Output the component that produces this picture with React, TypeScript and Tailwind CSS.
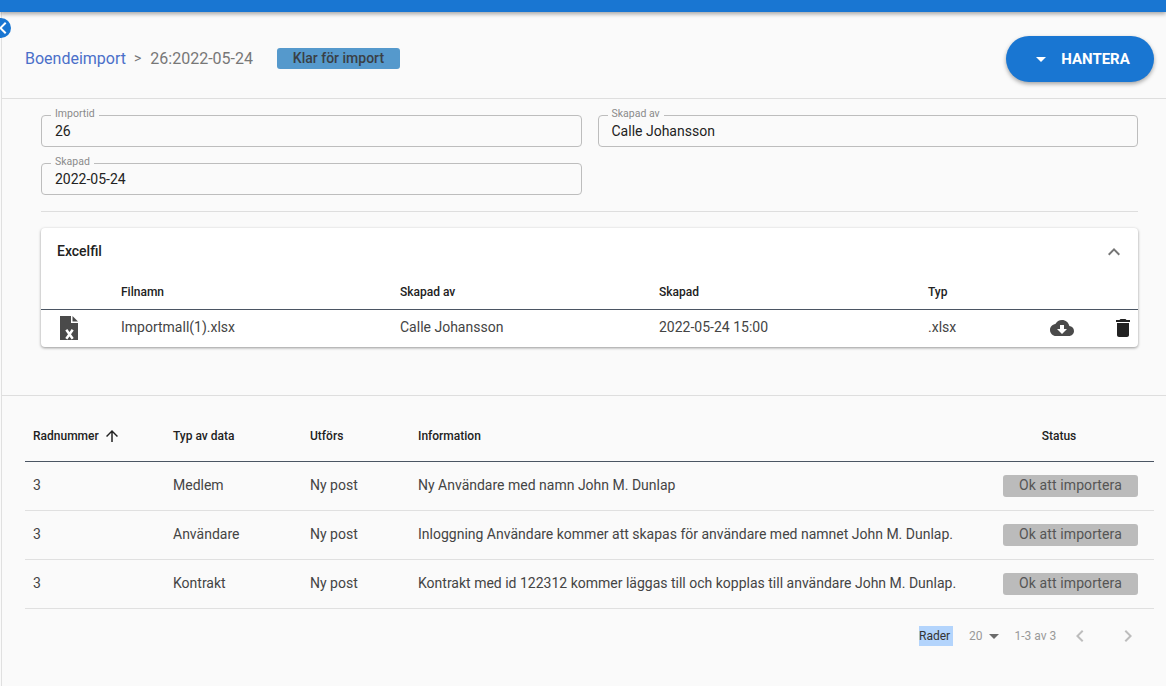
import React from "react";

const Icon = ({ d, size = 24, className = "" }: { d: string; size?: number; className?: string }) => (
  <svg width={size} height={size} viewBox="0 0 24 24" fill="currentColor" className={className}>
    <path d={d} />
  </svg>
);

const Field = ({ label, value }: { label: string; value: string }) => (
  <fieldset className="w-full h-[38px] -mt-[6px] border border-[#bdbdbd] rounded-[4px] pl-[9px] pr-2 min-w-0">
    <legend className="text-[10.5px] leading-[10px] pb-[2px] text-[#8a8a8a] px-[4px] ml-0">{label}</legend>
    <div className="pl-[4px] text-[14px] leading-[20px] text-[#222222]">{value}</div>
  </fieldset>
);

const rows = [
  ["Medlem", "Ny Användare med namn John M. Dunlap"],
  ["Användare", "Inloggning Användare kommer att skapas för användare med namnet John M. Dunlap."],
  ["Kontrakt", "Kontrakt med id 122312 kommer läggas till och kopplas till användare John M. Dunlap."],
];

export default function App() {
  return (
    <div className="relative h-[686px] w-full overflow-hidden bg-[#fafafa] text-[14px] text-[#333333]" style={{ fontFamily: "Roboto, sans-serif" }}>
      <div className="relative z-10 h-[12px] bg-[#1976d2] shadow-[0_2px_4px_rgba(0,0,0,0.35)]" />
      <div className="absolute z-20 left-[-9px] top-[18px] flex h-[20px] w-[20px] items-center justify-center rounded-full bg-[#1976d2] text-white">
        <Icon d="M15.41 7.41L14 6l-6 6 6 6 1.41-1.41L10.83 12z" size={24} className="shrink-0 ml-[3px]" />
      </div>
      <div className="ml-[1px] h-[674px] border-l border-[#e0e0e0]">
        <header className="flex h-[87px] items-start border-b border-[#dedede] pl-[23px] pr-[12px]">
          <div className="mt-[36px] flex h-[21px] items-center">
            <span className="text-[#4a6fc9] text-[16px]">Boendeimport</span>
            <span className="ml-[8px] text-[#777777] text-[14px]">&gt;</span>
            <span className="ml-[9px] text-[#777777] text-[16px]">26:2022-05-24</span>
            <span className="ml-[24px] flex h-[21px] w-[123px] items-center justify-center rounded-[3px] bg-[#5599cc] text-[14px] font-medium text-[#3a3f45]">Klar för import</span>
          </div>
          <button className="ml-auto mt-[24px] flex h-[46px] w-[148px] items-center justify-center rounded-[23px] bg-[#1976d2] text-[15px] font-bold text-white shadow-[0_2px_4px_rgba(0,0,0,0.35)]">
            <Icon d="M7 10l5 5 5-5z" size={24} className="mr-[8px] -ml-[1px]" />
            <span>HANTERA</span>
          </button>
        </header>

        <section className="h-[297px] border-b border-[#dedede] pl-[39px] pr-[28px] pt-[16px]">
          <div className="grid grid-cols-2 gap-x-[16px] gap-y-[16px]">
            <Field label="Importid" value="26" />
            <Field label="Skapad av" value="Calle Johansson" />
            <Field label="Skapad" value="2022-05-24" />
          </div>
          <div className="mt-[16px] border-t border-[#dedede]" />
          <div className="mt-[16px] h-[119px] rounded-[4px] bg-white shadow-[0_1px_3px_rgba(0,0,0,0.4)]">
            <div className="flex h-[48px] items-center pl-[16px] pr-[12px]">
              <span className="-mt-[2px] font-medium text-[#222222]">Excelfil</span>
              <Icon d="M12 8l-6 6 1.41 1.41L12 10.83l4.59 4.58L18 14z" className="ml-auto text-[#757575]" />
            </div>
            <div className="flex h-[34px] items-center border-b border-[#4b5563] pb-[2px] text-[12px] font-medium text-[#222222]">
              <span className="ml-[80px] w-[279px]">Filnamn</span>
              <span className="w-[259px]">Skapad av</span>
              <span className="w-[269px]">Skapad</span>
              <span>Typ</span>
            </div>
            <div className="flex h-[37px] items-center pb-[2px] text-[#444444]">
              <svg width="24" height="24" viewBox="0 0 24 24" className="ml-[16px] text-[#4a4a4a]" fill="currentColor">
                <path d="M3 0h11v7h7v17H3z" />
                <path d="M15.5 0L21 5.5h-5.5z" />
                <path d="M9.3 13.8l6.4 8.9M15.7 13.8l-6.4 8.9" stroke="#ffffff" strokeWidth="2.5" fill="none" />
              </svg>
              <span className="ml-[40px] w-[279px]">Importmall(1).xlsx</span>
              <span className="w-[259px]">Calle Johansson</span>
              <span className="w-[269px]">2022-05-24 15:00</span>
              <span className="w-[122px]">.xlsx</span>
              <Icon d="M19.35 10.04C18.67 6.59 15.64 4 12 4 9.11 4 6.6 5.64 5.35 8.04 2.34 8.36 0 10.91 0 14c0 3.31 2.69 6 6 6h13c2.76 0 5-2.24 5-5 0-2.64-2.05-4.78-4.65-4.96zM17 13l-5 5-5-5h3V9h4v4h3z" className="text-[#4a4a4a]" />
              <Icon d="M6 19c0 1.1.9 2 2 2h8c1.1 0 2-.9 2-2V7H6v12zM19 4h-3.5l-1-1h-5l-1 1H5v2h14V4z" className="ml-[37px] text-[#222222]" />
            </div>
          </div>
        </section>

        <section className="pl-[23px] pr-[12px]">
          <div className="flex h-[66px] items-center border-b border-[#4b5563] pt-[15px] text-[12px] font-medium text-[#222222]">
            <span className="flex w-[148px] items-center pl-[8px]">
              Radnummer
              <Icon d="M4 12l1.41 1.41L11 7.83V20h2V7.83l5.58 5.59L20 12l-8-8-8 8z" size={18} className="ml-[4px]" />
            </span>
            <span className="w-[137px]">Typ av data</span>
            <span className="w-[108px]">Utförs</span>
            <span className="w-[585px]">Information</span>
            <span className="w-[151px] pr-[39px] text-center">Status</span>
          </div>
          {rows.map(([type, info]) => (
            <div key={type} className="flex h-[49px] items-center border-b border-[#e0e0e0] text-[#444444]">
              <span className="-mt-[2px] w-[148px] pl-[8px]">3</span>
              <span className="-mt-[2px] w-[137px]">{type}</span>
              <span className="-mt-[2px] w-[108px]">Ny post</span>
              <span className="-mt-[2px] w-[585px] whitespace-nowrap">{info}</span>
              <span className="flex h-[22px] w-[135px] items-center justify-center rounded-[3px] bg-[#bbbbbb] pb-[2px] tracking-[0.1px] text-[#555555]">Ok att importera</span>
            </div>
          ))}
          <div className="flex h-[54px] items-center text-[12px] text-[#999999]">
            <span className="ml-[894px] flex h-[20px] w-[34px] items-center bg-[#b3d4fc] text-[#333333]">Rader</span>
            <span className="ml-[16px]">20</span>
            <Icon d="M7 10l5 5 5-5z" size={24} className="-ml-[1px] text-[#6b6b6b]" />
            <span className="ml-[9px]">1-3 av 3</span>
            <Icon d="M15.41 7.41L14 6l-6 6 6 6 1.41-1.41L10.83 12z" className="ml-[12px] text-[#bdbdbd]" />
            <Icon d="M10 6L8.59 7.41 13.17 12l-4.58 4.59L10 18l6-6z" className="ml-[24px] text-[#bdbdbd]" />
          </div>
        </section>
      </div>
    </div>
  );
}
